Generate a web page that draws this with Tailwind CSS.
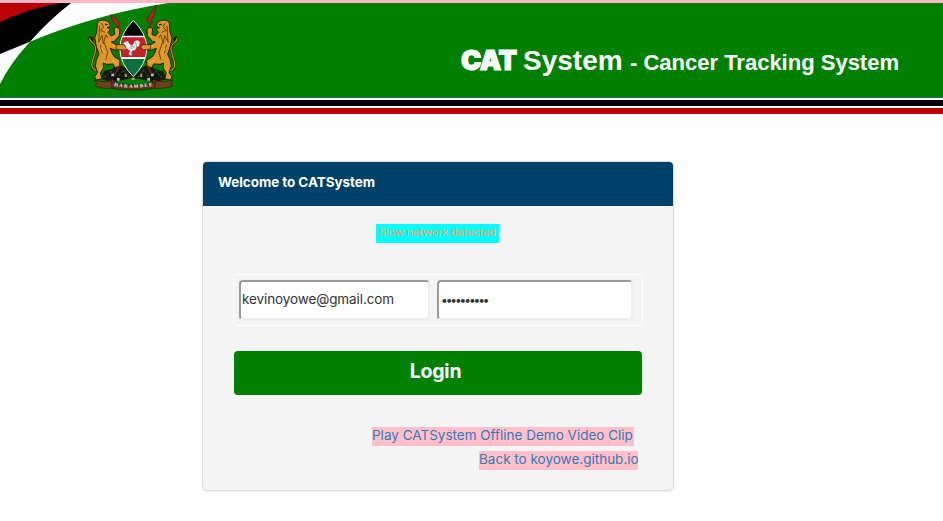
<!DOCTYPE html>
<html lang="en">
<head>
<meta charset="utf-8">
<title>CATSystem</title>
<script src="https://cdn.jsdelivr.net/npm/@tailwindcss/browser@4"></script>
</head>
<body class="bg-white h-[521px] overflow-hidden font-['Inter',sans-serif] text-[#333]">
<header class="border-t-[3px] border-[#ffb6c1]">
  <div class="relative h-[95px] bg-[#008000] border-b border-[#2e6070] flex justify-end pr-[44px]">
    <svg class="absolute left-0 top-0 w-[200px] h-[94px]" viewBox="0 9 600 282">
      <path fill="#fff" d="M213 9H505Q290 42 90 125Q30 190 0 252V162Z"/>
      <path fill="#000" d="M0 9H213Q145 62 90 125L0 162Z"/>
      <path fill="#b00" d="M0 9H180Q85 25 0 66Z"/>
    </svg>
    <svg class="absolute left-[80px] top-[2px] w-[110px] h-[90px]" viewBox="0 0 330 270">
      <defs>
        <g id="lion">
          <path d="M50 197C18 187 50 150 47 127C43 110 27 113 29 99C34 94 40 104 35 108" fill="none" stroke="#2b1a00" stroke-width="7"/>
          <path d="M50 197C18 187 50 150 47 127C43 110 27 113 29 99" fill="none" stroke="#d99325" stroke-width="3.5"/>
          <path d="M52 55C58 42 76 43 87 52L91 61L84 68L91 74L84 82L94 93L104 88L102 71L110 66L119 73L118 92L103 109L94 111L106 118L132 119L137 127L126 136L105 135L91 130L97 146L104 156L120 165L119 184L105 188L99 177L80 178L69 174L71 188L61 204L66 221L48 225L44 214L53 203L46 183L49 165L57 148L49 124L44 99L50 81Z" fill="#dc9728" stroke="#2b1a00" stroke-width="3" stroke-linejoin="round"/>
          <path d="M59 62L56 112L66 91L70 116L78 89L84 99M64 54L71 65L62 76L75 82M73 113L83 143L77 164M61 119L67 145" fill="none" stroke="#714000" stroke-width="3"/>
          <path d="M75 58L83 59M81 68L89 67" stroke="#111" stroke-width="4"/>
          <path d="M65 128L73 145M99 123L126 127M94 164L112 175M61 190L56 207" stroke="#f0ac38" stroke-width="4"/>
        </g>
      </defs>
      <path fill="#141b12" d="M61 222L72 198L95 193L114 176L160 203L206 176L225 193L248 198L262 222L224 232L160 218L96 232Z"/>
      <path d="M72 216L92 200L110 215L130 196L148 217M174 217L191 196L207 216L229 199L247 218" fill="none" stroke="#174d2b" stroke-width="5" stroke-dasharray="7 4"/>
      <path d="M82 203L103 222L118 201L141 219M180 219L199 200L219 222L238 204" fill="none" stroke="#000" stroke-width="5" stroke-dasharray="4 5"/>
      <path d="M102 47L122 83M218 47L198 83M122 176L103 211M198 176L217 211" stroke="#98151b" stroke-width="4"/>
      <path fill="#c41b22" stroke="#651014" stroke-width="2" d="M92 29L108 40L120 61L111 65L98 47ZM230 -2L220 34L207 54L200 47L210 28Z"/>
      <use href="#lion"/>
      <use href="#lion" transform="translate(320 0) scale(-1 1)"/>
      <clipPath id="shield"><path d="M160 47Q121 85 119 130Q121 178 160 215Q198 178 201 130Q199 85 160 47Z"/></clipPath>
      <g clip-path="url(#shield)">
        <path fill="#000" d="M110 40h100v55H110z"/>
        <path fill="#fff" d="M110 92h100v70H110z"/>
        <path fill="#c8202a" d="M110 97h100v59H110z"/>
        <path fill="#0a713d" d="M110 162h100v60H110z"/>
      </g>
      <path fill="none" stroke="#e5e8e4" stroke-width="3" d="M160 46Q121 85 119 130Q121 178 160 215Q198 178 201 130Q199 85 160 46Z"/>
      <path fill="#eee" stroke="#665" stroke-width="1" d="M136 110l8-2 4 8 9 5 7-12 9-4 7 7-3 12-7 3-4 9-9 1-3 9 5 3-9 3-4-6 4-8-10-8-9 6-2-4 8-7-5-7-6-1z"/>
      <path d="M150 122l15 5M167 111l3 15M148 128l9 2" stroke="#777" stroke-width="2"/>
      <path fill="#dc9728" stroke="#2b1a00" stroke-width="2" d="M108 119l24 0 6 8-8 8-22-3zM212 119l-24 0-6 8 8 8 22-3z"/>
      <path fill="#bbb" d="M94 206h8v8h-8zM111 219h8v8h-8zM213 206h8v8h-8zM202 219h8v8h-8z"/>
      <path fill="#c79a35" d="M134 207h6v9h-6zM181 207h6v9h-6zM155 218h9v7h-9z"/>
      <path fill="#70401f" stroke="#28180c" stroke-width="2" d="M42 225Q78 236 101 223L106 247Q76 255 45 243L50 235ZM278 225Q242 236 219 223L214 247Q244 255 278 243L272 235Z"/>
      <path fill="#5b351d" stroke="#28180c" stroke-width="2" d="M93 230Q160 249 227 230L224 250Q160 261 96 250Z"/>
      <path id="motto" fill="none" d="M102 243Q160 254 221 242"/>
      <text class="font-['Liberation_Serif',serif] font-bold" font-size="15" fill="#eee" textLength="116"><textPath href="#motto" textLength="116">HARAMBEE</textPath></text>
    </svg>
    <h1 class="flex items-baseline h-[42px] mt-[42px] font-['Liberation_Sans',sans-serif] font-bold text-white text-[28px] leading-[32px] whitespace-nowrap">
      <span class="font-['Inter',sans-serif] font-black text-[27px] w-[62px] tracking-[-0.4px] [-webkit-text-stroke:1.2px_white]">CAT</span>
      <span class="w-[107px]">System</span>
      <span class="text-[22px]">- Cancer Tracking System</span>
    </h1>
  </div>
  <div class="mt-[2px] h-[6px] bg-black"></div>
  <div class="mt-[2px] h-[6px] bg-[#b00]"></div>
</header>
<main class="mt-[47px] ml-[202px] w-[472px] h-[330px] rounded-[5px] border border-[#ddd] bg-[#f4f4f4] shadow-[0_1px_2px_rgba(0,0,0,0.08)] overflow-hidden">
  <div class="h-[44px] bg-[#00416a] pl-[15px] text-white font-bold text-[13.5px] leading-[40px] tracking-[-0.07px]">Welcome to CATSystem</div>
  <div class="mt-[18px] ml-[173px] w-[123px] h-[19px] bg-[#00ffff] pl-[3px] text-[11px] leading-[17px] tracking-[-0.2px] text-[#d9b078] font-medium whitespace-nowrap">Slow network detected.</div>
  <form class="mt-[31px] ml-[30px] w-[410px]">
    <div class="flex gap-[7px] h-[52px] border border-white rounded-[5px] pl-[5px] pt-[5px]">
      <div class="w-[191px] h-[40px] bg-white border-2 border-t-[#999] border-l-[#999] border-r-[#eee] border-b-[#eee] rounded-[4px] pl-[1px] text-[13.5px] leading-[35px] tracking-[-0.1px]">kevinoyowe@gmail.com</div>
      <div class="w-[196px] h-[40px] bg-white border-2 border-t-[#999] border-l-[#999] border-r-[#eee] border-b-[#eee] rounded-[4px] pl-[2px] text-[12px] leading-[35px] tracking-[-2.1px]">••••••••••</div>
    </div>
    <button type="button" class="block mt-[25px] ml-px w-[408px] h-[44px] rounded-[4px] bg-[#008000] text-white font-bold text-[19.5px] leading-[40px] pb-[4px] pr-[5px] tracking-[-0.2px]">Login</button>
  </form>
  <div class="mt-[32px] pr-[35px] flex flex-col items-end gap-[5px] text-[13.5px] leading-[17px] text-[#337ab7] whitespace-nowrap">
    <a class="bg-[#ffc0cb] h-[19px] w-[262px] mr-[4px]">Play CATSystem Offline Demo Video Clip</a>
    <a class="bg-[#ffc0cb] h-[19px] w-[159px]">Back to koyowe.github.io</a>
  </div>
</main>
</body>
</html>
